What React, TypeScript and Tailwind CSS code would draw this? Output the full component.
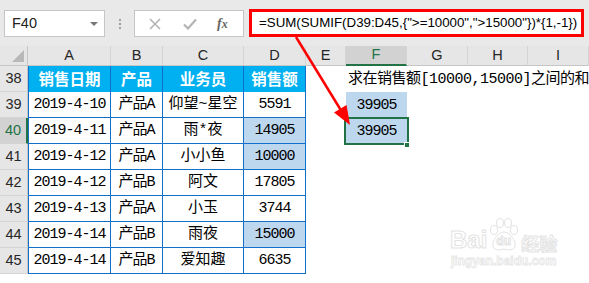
import { FC } from 'react';

// ~ ~ ~ ~ ~ ~ ~ ~ ~ ~ ~ ~ ~ ~ ~ ~ ~ ~ ~ ~ ~ ~ Data

type Row = { date: string; product: string; person: string; amount: string; hit: boolean };

const rows: Row[] = [
  { date: '2019-4-10', product: '产品A', person: '仰望~星空', amount: '5591', hit: false },
  { date: '2019-4-11', product: '产品A', person: '雨*夜', amount: '14905', hit: true },
  { date: '2019-4-12', product: '产品A', person: '小小鱼', amount: '10000', hit: true },
  { date: '2019-4-12', product: '产品B', person: '阿文', amount: '17805', hit: false },
  { date: '2019-4-13', product: '产品A', person: '小玉', amount: '3744', hit: false },
  { date: '2019-4-14', product: '产品B', person: '雨夜', amount: '15000', hit: true },
  { date: '2019-4-14', product: '产品B', person: '爱知趣', amount: '6635', hit: false },
];

const columns = ['A', 'B', 'C', 'D', 'E', 'F', 'G', 'H', 'I'];

const formula = '=SUM(SUMIF(D39:D45,{">=10000",">15000"})*{1,-1})';

const cellFont = "font-['Liberation_Mono','Noto_Sans_CJK_SC',monospace] text-[15px] tracking-[-1px] text-black";
const headFont = "font-['Liberation_Sans',Arial,sans-serif] text-[14.5px]";
const tableCell = 'flex items-center justify-center border-r border-b border-[#1170c8] pt-[2px]';

// ~ ~ ~ ~ ~ ~ ~ ~ ~ ~ ~ ~ ~ ~ ~ ~ ~ ~ ~ ~ ~ ~ Formula bar

const FormulaBar: FC = () => (
  <div className="flex h-[46px] items-start bg-[#e9e9e9] pt-[9px]">
    <div className="ml-[4px] mt-[1px] flex h-[27px] w-[101px] items-center justify-between border border-[#c6c6c6] bg-white pl-[7px] pr-[6px]">
      <span className={`${headFont} text-[#222]`}>F40</span>
      <span className="h-0 w-0 border-x-[4px] border-t-[4px] border-x-transparent border-t-[#777]" />
    </div>
    <div className="ml-[14px] mt-[10px] flex flex-col gap-[2px]">
      <span className="h-[2px] w-[2px] bg-[#a0a0a0]" />
      <span className="h-[2px] w-[2px] bg-[#a0a0a0]" />
      <span className="h-[2px] w-[2px] bg-[#a0a0a0]" />
    </div>
    <div className="ml-[13px] mt-[1px] flex h-[27px] w-[110px] items-center border border-[#c6c6c6] bg-white">
      <svg width="12" height="12" viewBox="0 0 12 12" className="ml-[14px]">
        <path d="M1 1 L11 11 M11 1 L1 11" stroke="#b4b4b4" strokeWidth="1.6" />
      </svg>
      <svg width="14" height="12" viewBox="0 0 14 12" className="ml-[22px]">
        <path d="M1 6.5 L5 10.5 L13 1.5" stroke="#b4b4b4" strokeWidth="2.2" fill="none" />
      </svg>
      <span className="ml-[20px] font-['Liberation_Serif',serif] text-[14px] font-bold italic text-[#666]">
        f<span className="text-[12px]">x</span>
      </span>
    </div>
    <div className="ml-[5px] mr-[5px] flex h-[28px] flex-1 items-center border-[3px] border-[#ff0000] bg-white pl-[7px]">
      <span className="whitespace-nowrap font-['Liberation_Sans',Arial,sans-serif] text-[13.3px] text-black">
        {formula}
      </span>
    </div>
  </div>
);

// ~ ~ ~ ~ ~ ~ ~ ~ ~ ~ ~ ~ ~ ~ ~ ~ ~ ~ ~ ~ ~ ~ Sheet

const Sheet: FC = () => (
  <div className="grid grid-cols-[28px_83px_52px_81px_62px_40px_61px_61px_60px_1fr] grid-rows-[20px_repeat(8,26px)_1fr]">
    {/* corner */}
    <div className="relative border-r border-b border-[#c6c6c6] bg-[#e6e6e6]">
      <svg width="12" height="12" viewBox="0 0 12 12" className="absolute bottom-[3px] right-[3px]">
        <path d="M12 0 L12 12 L0 12 Z" fill="#b8b8b8" />
      </svg>
    </div>
    {columns.map(c => (
      <div
        key={c}
        className={`flex items-center justify-center border-r border-[#d4d4d4] ${headFont} ${
          c === 'F'
            ? 'border-b-2 border-b-[#217346] bg-[#d2d2d2] text-[#217346]'
            : 'border-b border-b-[#c6c6c6] bg-[#e6e6e6] text-[#262626]'
        }`}
      >
        {c}
      </div>
    ))}

    {/* row 38: table header */}
    <div className={`flex items-end justify-center border-r border-b border-[#c6c6c6] border-b-[#d4d4d4] bg-[#e6e6e6] pb-[1px] ${headFont} text-[#262626]`}>38</div>
    {['销售日期', '产品', '业务员', '销售额'].map((t, i) => (
      <div
        key={t}
        className={`flex items-center justify-center border-r border-[#1170c8] bg-[#00b0f0] font-['Noto_Sans_CJK_SC',sans-serif] text-[15.5px] font-bold text-white ${
          i === 0 ? 'border-l' : ''
        }`}
      >
        {t}
      </div>
    ))}
    <div className="bg-white" />
    <div className="col-span-4 flex items-end whitespace-nowrap pb-[1px] pl-[2px] font-['Liberation_Mono','Noto_Sans_CJK_SC',monospace] text-[15px] tracking-[-0.5px] text-black">
      求在销售额[10000,15000]之间的和
    </div>

    {rows.map((r, i) => {
      const n = 39 + i;
      const selected = n === 40;
      return [
        <div
          key={`h${n}`}
          className={`flex items-end justify-center border-b border-[#d4d4d4] pb-[1px] ${headFont} ${
            selected
              ? 'border-r-2 border-r-[#217346] bg-[#d2d2d2] text-[#217346]'
              : 'border-r border-r-[#c6c6c6] bg-[#e6e6e6] text-[#262626]'
          }`}
        >
          {n}
        </div>,
        <div key={`a${n}`} className={`${tableCell} border-l ${cellFont}`}>{r.date}</div>,
        <div key={`b${n}`} className={`${tableCell} ${cellFont}`}>{r.product}</div>,
        <div key={`c${n}`} className={`${tableCell} ${cellFont} tracking-normal`}>{r.person}</div>,
        <div key={`d${n}`} className={`${tableCell} ${cellFont} ${r.hit ? 'bg-[#bdd7ee]' : 'bg-white'}`}>{r.amount}</div>,
        <div key={`e${n}`} className="bg-white" />,
        n === 39 ? (
          <div key={`f${n}`} className={`flex items-center justify-center bg-[#bdd7ee] pt-[2px] ${cellFont}`}>39905</div>
        ) : n === 40 ? (
          <div key={`f${n}`} className={`relative flex items-center justify-center bg-[#bdd7ee] pt-[2px] ${cellFont}`}>
            39905
            <span className="absolute inset-x-[-2px] inset-y-[-1px] border-2 border-[#217346]" />
            <span className="absolute bottom-[-4px] right-[-3px] h-[6px] w-[6px] border border-white bg-[#217346]" />
          </div>
        ) : (
          <div key={`f${n}`} className="bg-white" />
        ),
        <div key={`g${n}`} className="bg-white" />,
        <div key={`hh${n}`} className="bg-white" />,
        <div key={`i${n}`} className="bg-white" />,
      ];
    })}

    {/* row 46, cut off */}
    <div className="border-r border-[#c6c6c6] bg-[#e6e6e6]" />
    <div className="col-span-9 bg-white" />
  </div>
);

// ~ ~ ~ ~ ~ ~ ~ ~ ~ ~ ~ ~ ~ ~ ~ ~ ~ ~ ~ ~ ~ ~ Overlays

const Arrow: FC = () => (
  <svg width="589" height="283" className="pointer-events-none absolute left-0 top-0">
    <line x1="296" y1="37" x2="342" y2="112" stroke="#ff0000" strokeWidth="2.5" />
    <polygon points="350,125 334,112.5 346.5,105" fill="#ff0000" />
  </svg>
);

const Watermark: FC = () => (
  <div className="pointer-events-none absolute left-[450px] top-[218px] flex flex-col items-center">
    <div className="flex items-end">
      <span className="font-['Liberation_Sans',Arial,sans-serif] text-[24px] font-bold leading-none text-white [-webkit-text-stroke:1px_#e3e3e3]">
        Bai
      </span>
      <div className="relative h-[34px] w-[34px]">
        <svg width="34" height="34" viewBox="0 0 34 34" className="absolute left-0 top-0">
          <g fill="white" stroke="#e3e3e3" strokeWidth="1">
            <ellipse cx="7" cy="12" rx="3.5" ry="4.5" />
            <ellipse cx="13" cy="5" rx="3.5" ry="4.5" />
            <ellipse cx="21" cy="5" rx="3.5" ry="4.5" />
            <ellipse cx="27" cy="12" rx="3.5" ry="4.5" />
            <path d="M17 14 C10 14 5 24 6 28 C7 33 13 32 17 31 C21 32 27 33 28 28 C29 24 24 14 17 14 Z" />
          </g>
        </svg>
        <span className="absolute left-[9px] top-[17px] font-['Liberation_Sans',Arial,sans-serif] text-[12px] font-bold leading-none text-white [-webkit-text-stroke:1px_#e3e3e3]">
          du
        </span>
      </div>
      <span className="font-['Noto_Sans_CJK_SC',sans-serif] text-[18px] font-bold leading-none text-white [-webkit-text-stroke:1px_#e3e3e3]">
        经验
      </span>
    </div>
    <span className="mt-[3px] font-['Liberation_Sans',Arial,sans-serif] text-[12px] font-bold leading-none text-white [-webkit-text-stroke:0.8px_#e6e6e6]">
      jingyan.baidu.com
    </span>
  </div>
);

// ~ ~ ~ ~ ~ ~ ~ ~ ~ ~ ~ ~ ~ ~ ~ ~ ~ ~ ~ ~ ~ ~ Page

export const App: FC = () => (
  <div className="relative h-[283px] w-[589px] overflow-hidden bg-white">
    <FormulaBar />
    <Sheet />
    <Arrow />
    <Watermark />
  </div>
);

export default App;
